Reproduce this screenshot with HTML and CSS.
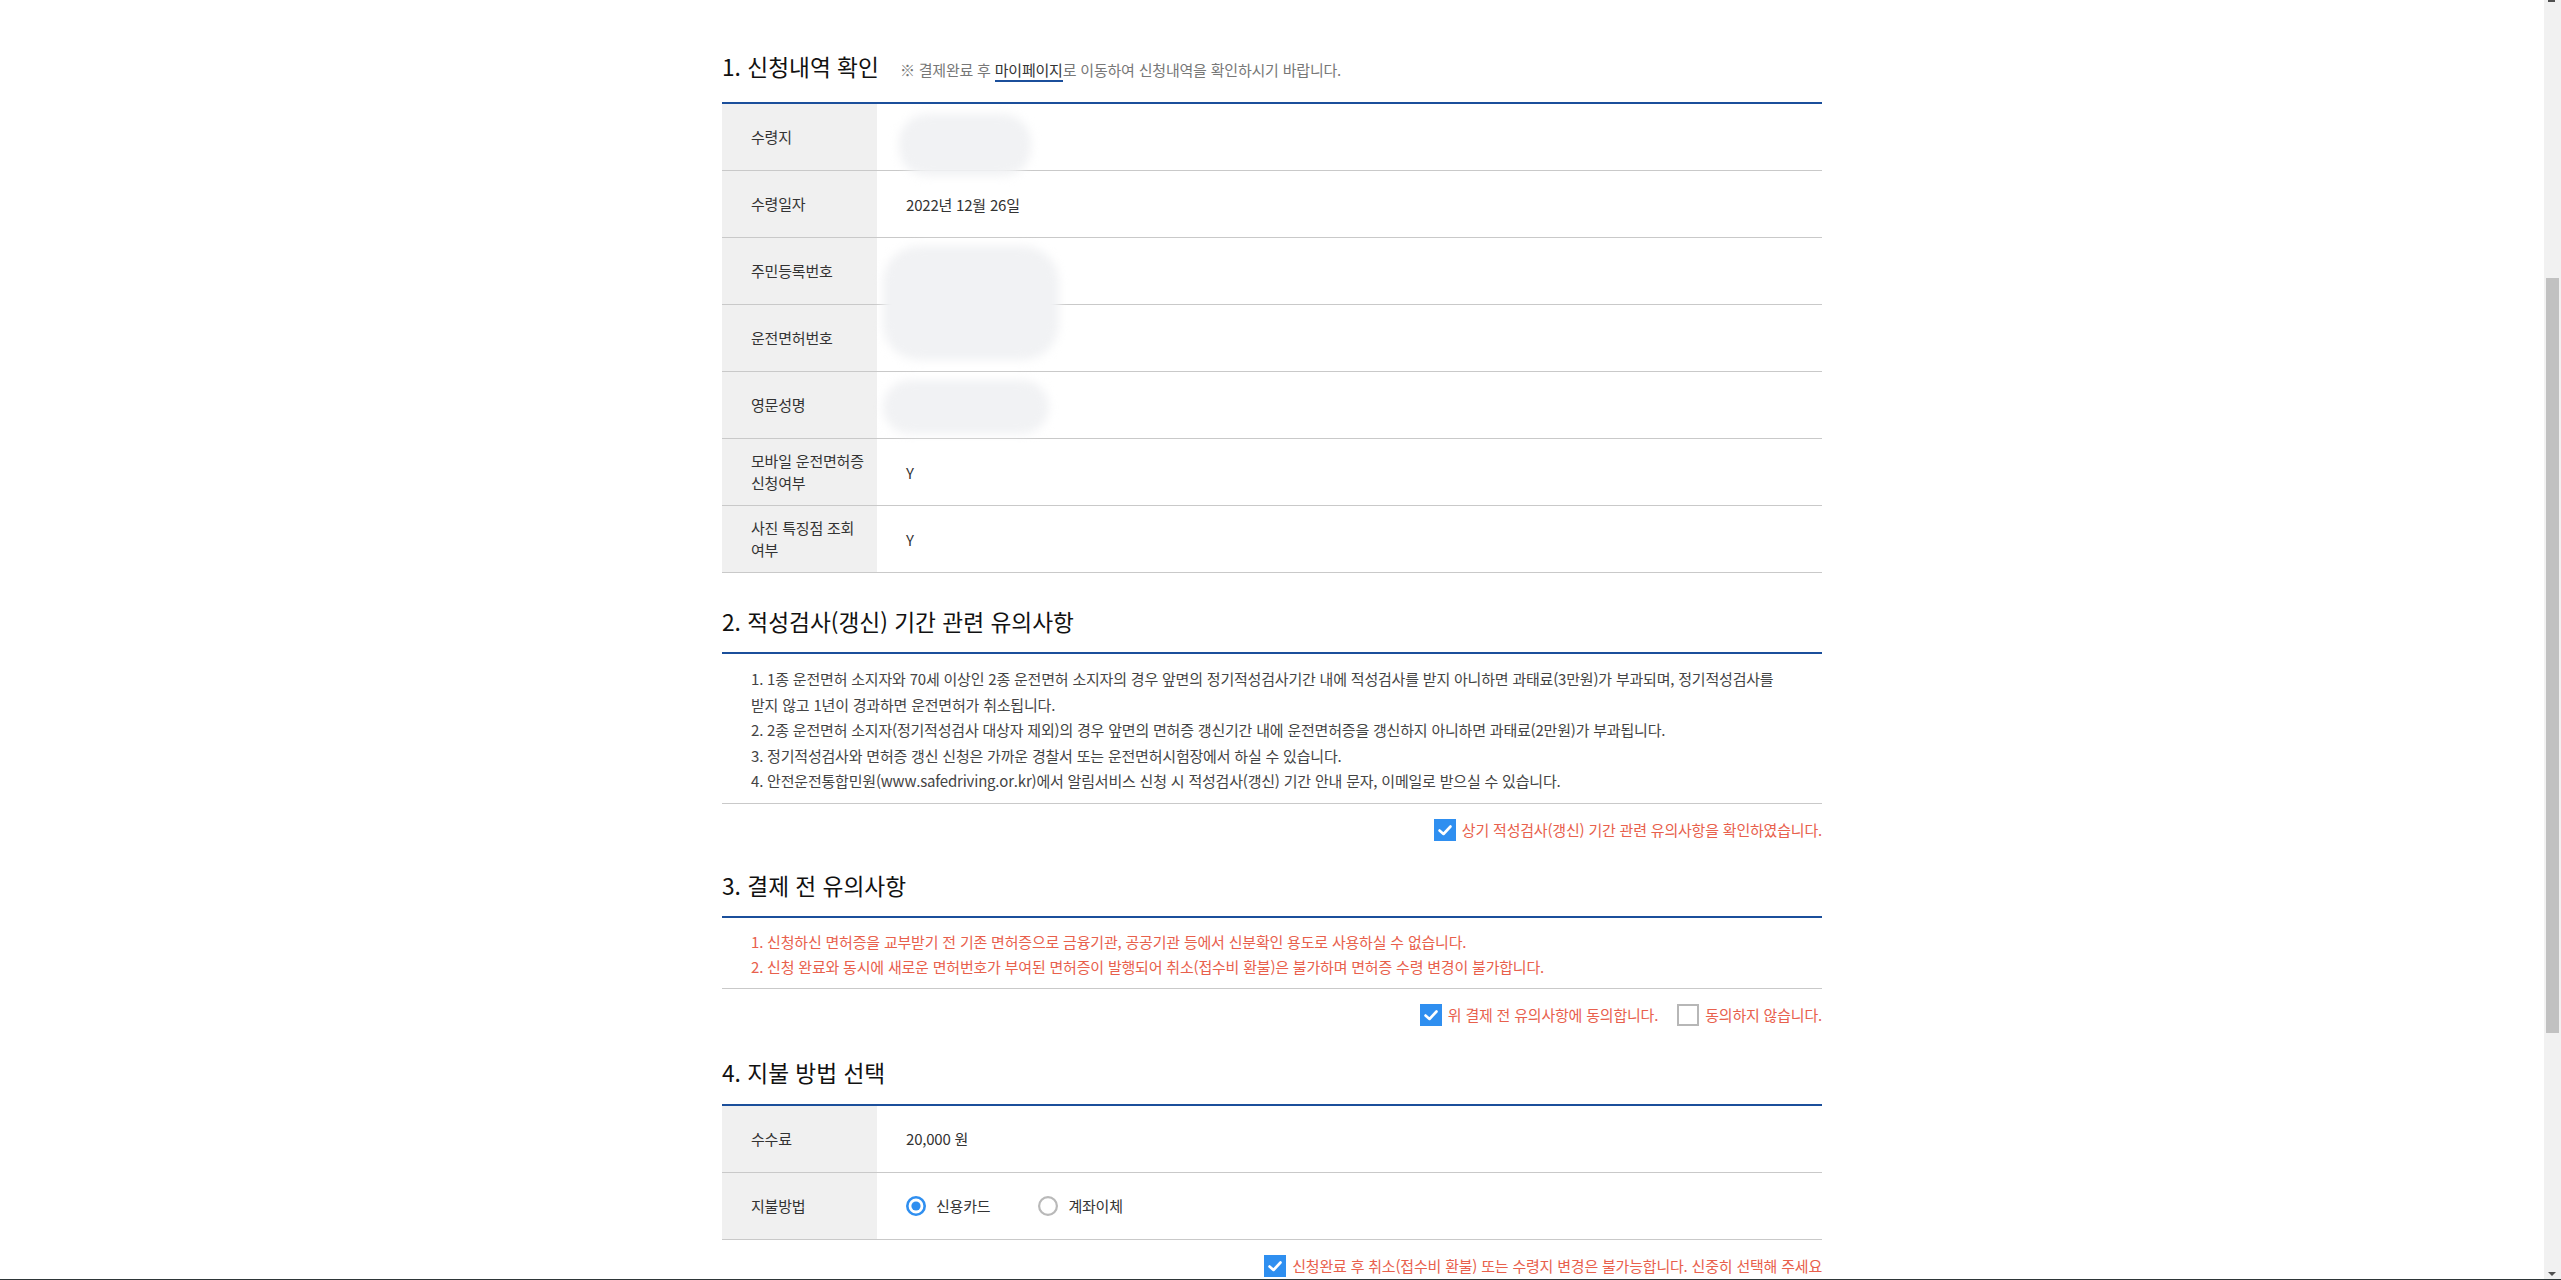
FILE: index.html
```html
<!DOCTYPE html>
<html lang="ko">
<head>
<meta charset="utf-8">
<title>신청내역 확인</title>
<link rel="stylesheet" href="styles.css">
</head>
<body>
<div class="page">
  <main class="main">
    <div class="container">

      <section class="sec sec-first">
        <div class="sec-head sec-head-note">
          <h3 class="sec-title">1. 신청내역 확인</h3>
          <p class="sec-note">※ 결제완료 후 <span class="note-link">마이페이지</span>로 이동하여 신청내역을 확인하시기 바랍니다.</p>
        </div>
        <div class="info">
          <div class="row"><div class="row-th">수령지</div><div class="row-td"><span class="redact redact-1"></span></div></div>
          <div class="row"><div class="row-th">수령일자</div><div class="row-td">2022년 12월 26일</div></div>
          <div class="row"><div class="row-th">주민등록번호</div><div class="row-td"><span class="redact redact-2"></span></div></div>
          <div class="row"><div class="row-th">운전면허번호</div><div class="row-td"></div></div>
          <div class="row"><div class="row-th">영문성명</div><div class="row-td"><span class="redact redact-3"></span></div></div>
          <div class="row"><div class="row-th">모바일 운전면허증 신청여부</div><div class="row-td">Y</div></div>
          <div class="row"><div class="row-th">사진 특징점 조회 여부</div><div class="row-td">Y</div></div>
        </div>
      </section>

      <section class="sec sec-after-table">
        <div class="sec-head">
          <h3 class="sec-title">2. 적성검사(갱신) 기간 관련 유의사항</h3>
        </div>
        <ul class="notice">
          <li>1. 1종 운전면허 소지자와 70세 이상인 2종 운전면허 소지자의 경우 앞면의 정기적성검사기간 내에 적성검사를 받지 아니하면 과태료(3만원)가 부과되며, 정기적성검사를<br>받지 않고 1년이 경과하면 운전면허가 취소됩니다.</li>
          <li>2. 2종 운전면허 소지자(정기적성검사 대상자 제외)의 경우 앞면의 면허증 갱신기간 내에 운전면허증을 갱신하지 아니하면 과태료(2만원)가 부과됩니다.</li>
          <li>3. 정기적성검사와 면허증 갱신 신청은 가까운 경찰서 또는 운전면허시험장에서 하실 수 있습니다.</li>
          <li>4. 안전운전통합민원(www.safedriving.or.kr)에서 알림서비스 신청 시 적성검사(갱신) 기간 안내 문자, 이메일로 받으실 수 있습니다.</li>
        </ul>
        <div class="check-row">
          <label class="check">
            <span class="box box-on"><svg viewBox="0 0 22 22" width="22" height="22"><polyline points="5.5,11.5 9.5,15 16.5,7.5" fill="none" stroke="#fff" stroke-width="2.6" stroke-linecap="round" stroke-linejoin="round"/></svg></span>
            <span>상기 적성검사(갱신) 기간 관련 유의사항을 확인하였습니다.</span>
          </label>
        </div>
      </section>

      <section class="sec sec-after-check">
        <div class="sec-head">
          <h3 class="sec-title">3. 결제 전 유의사항</h3>
        </div>
        <ul class="notice notice-red">
          <li>1. 신청하신 면허증을 교부받기 전 기존 면허증으로 금융기관, 공공기관 등에서 신분확인 용도로 사용하실 수 없습니다.</li>
          <li>2. 신청 완료와 동시에 새로운 면허번호가 부여된 면허증이 발행되어 취소(접수비 환불)은 불가하며 면허증 수령 변경이 불가합니다.</li>
        </ul>
        <div class="check-row">
          <label class="check">
            <span class="box box-on"><svg viewBox="0 0 22 22" width="22" height="22"><polyline points="5.5,11.5 9.5,15 16.5,7.5" fill="none" stroke="#fff" stroke-width="2.6" stroke-linecap="round" stroke-linejoin="round"/></svg></span>
            <span>위 결제 전 유의사항에 동의합니다.</span>
          </label>
          <label class="check">
            <span class="box box-off"></span>
            <span>동의하지 않습니다.</span>
          </label>
        </div>
      </section>

      <section class="sec sec-after-check sec-pay">
        <div class="sec-head">
          <h3 class="sec-title">4. 지불 방법 선택</h3>
        </div>
        <div class="info">
          <div class="row"><div class="row-th">수수료</div><div class="row-td">20,000 원</div></div>
          <div class="row">
            <div class="row-th">지불방법</div>
            <div class="row-td">
              <div class="radios">
                <label class="radio">
                  <svg viewBox="0 0 20 20" width="20" height="20"><circle cx="10" cy="10" r="8.7" fill="#fff" stroke="#2f8ff0" stroke-width="2.6"/><circle cx="10" cy="10" r="4.6" fill="#2f8ff0"/></svg>
                  <span>신용카드</span>
                </label>
                <label class="radio">
                  <svg viewBox="0 0 20 20" width="20" height="20"><circle cx="10" cy="10" r="8.9" fill="#fff" stroke="#b9b9b9" stroke-width="2.2"/></svg>
                  <span>계좌이체</span>
                </label>
              </div>
            </div>
          </div>
        </div>
        <div class="check-row">
          <label class="check">
            <span class="box box-on"><svg viewBox="0 0 22 22" width="22" height="22"><polyline points="5.5,11.5 9.5,15 16.5,7.5" fill="none" stroke="#fff" stroke-width="2.6" stroke-linecap="round" stroke-linejoin="round"/></svg></span>
            <span>신청완료 후 취소(접수비 환불) 또는 수령지 변경은 불가능합니다. 신중히 선택해 주세요</span>
          </label>
        </div>
      </section>

    </div>
  </main>
  <aside class="scrollbar">
    <span class="sb-arrow-top"></span>
    <span class="sb-thumb"></span>
    <span class="sb-arrow-bottom"></span>
  </aside>
</div>
</body>
</html>
```

FILE: styles.css
```css
html, body {
  margin: 0;
  padding: 0;
}

body {
  font-family: "Noto Sans CJK KR", "Noto Sans", sans-serif;
  font-size: 15px;
  letter-spacing: -0.2px;
  color: #333;
  background: #fff;
}

.page {
  display: flex;
  height: 1280px;
  box-sizing: border-box;
  border-bottom: 1px solid #2e3638;
  overflow: hidden;
}

.main {
  flex: 1;
  min-width: 0;
}

.container {
  width: 1100px;
  margin: 0 auto;
  padding-top: 52px;
}

/* section headers */
.sec-head {
  display: flex;
  align-items: baseline;
  gap: 21px;
  padding-bottom: 15px;
  border-bottom: 2px solid #1b4f9b;
}

.sec-head-note {
  padding-bottom: 20px;
}

.sec-title {
  margin: 0;
  font-size: 22.7px;
  font-weight: 400;
  letter-spacing: 0;
  line-height: 30px;
  color: #111;
}

.sec-note {
  margin: 0;
  font-size: 15px;
  color: #777;
}

.note-link {
  color: #333;
  border-bottom: 2px solid #1b4f9b;
}

.sec-after-table {
  margin-top: 34px;
}

.sec-after-check {
  margin-top: 30px;
}

.sec-pay {
  margin-top: 32px;
}

.sec-pay .sec-head {
  padding-bottom: 16px;
}

/* info rows */
.row {
  display: flex;
  height: 67px;
  box-sizing: border-box;
  border-bottom: 1px solid #c9c9c9;
}

.row-th {
  width: 155px;
  flex: none;
  box-sizing: border-box;
  padding: 0 8px 0 29px;
  background: #f0f0f0;
  display: flex;
  align-items: center;
  line-height: 22px;
  word-break: keep-all;
  color: #333;
}

.row-td {
  flex: 1;
  display: flex;
  align-items: center;
  padding-left: 29px;
  position: relative;
  color: #333;
}

/* redaction blur overlays */
.redact {
  position: absolute;
  z-index: 2;
  background: #f1f2f4;
  border-radius: 28px;
  filter: blur(5px);
}

.redact-1 {
  top: 10px;
  left: 22px;
  width: 132px;
  height: 62px;
}

.redact-2 {
  top: 8px;
  left: 6px;
  width: 176px;
  height: 114px;
  border-radius: 36px;
}

.redact-3 {
  top: 8px;
  left: 6px;
  width: 166px;
  height: 54px;
}

/* notices */
.notice {
  list-style: none;
  margin: 0;
  padding: 12px 20px 9px 29px;
  line-height: 25.5px;
  color: #444;
  border-bottom: 1px solid #c9c9c9;
}

.notice-red {
  padding-top: 11px;
  padding-bottom: 8px;
  color: #e8604c;
}

/* check rows */
.check-row {
  display: flex;
  justify-content: flex-end;
  align-items: center;
  gap: 19px;
  padding-top: 15px;
}

.check {
  display: flex;
  align-items: center;
  gap: 6px;
  color: #e8604c;
  line-height: 22px;
}

.box {
  width: 22px;
  height: 22px;
  box-sizing: border-box;
  display: block;
  flex: none;
}

.box svg {
  display: block;
}

.box-on {
  background: #2f8ff0;
}

.box-off {
  background: #fff;
  border: 2px solid #b7b7b7;
}

/* radios */
.radios {
  display: flex;
  align-items: center;
  gap: 48px;
}

.radio {
  display: flex;
  align-items: center;
  gap: 10px;
  color: #333;
}

.radio svg {
  display: block;
}

/* fake scrollbar */
.scrollbar {
  width: 17px;
  flex: none;
  background: #f1f1f1;
  display: flex;
  flex-direction: column;
  align-items: flex-start;
}

.sb-arrow-top {
  display: block;
  width: 7px;
  height: 2px;
  margin-left: 4px;
  background: #505050;
}

.sb-thumb {
  display: block;
  width: 13px;
  height: 755px;
  margin: 276px 0 0 2px;
  background: #c1c1c1;
}

.sb-arrow-bottom {
  display: block;
  width: 0;
  height: 0;
  margin: auto 0 3px 4px;
  border-left: 4px solid transparent;
  border-right: 4px solid transparent;
  border-top: 4px solid #505050;
}
```
